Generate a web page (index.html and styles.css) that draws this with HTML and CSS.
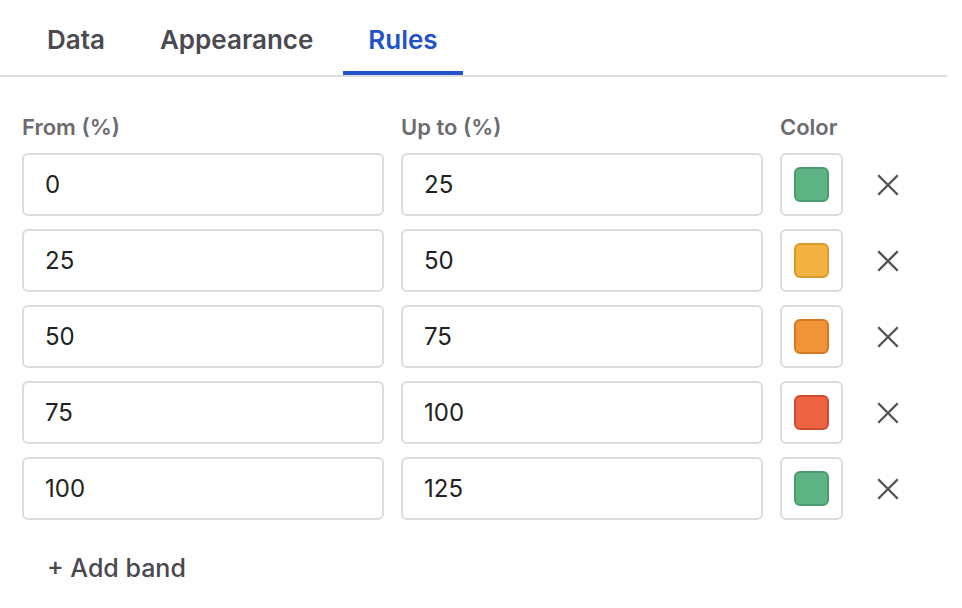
FILE: index.html
```html
<!DOCTYPE html>
<html lang="en">
<head>
  <meta charset="UTF-8">
  <title>Rules</title>
  <link rel="stylesheet" href="styles.css">
</head>
<body>
  <div class="panel">
    <div class="tabs">
      <div class="tab">Data</div>
      <div class="tab">Appearance</div>
      <div class="tab active">Rules</div>
    </div>
    <div class="rules">
      <div class="band-row band-head">
        <div class="col-input">From (%)</div>
        <div class="col-input">Up to (%)</div>
        <div class="col-color">Color</div>
      </div>
      <div class="band-row">
        <input class="field" type="text" value="0">
        <input class="field" type="text" value="25">
        <div class="swatch-box"><span class="swatch swatch-green"></span></div>
        <button class="remove"><svg viewBox="0 0 24 24" width="26" height="26"><path d="M3 3L21 21M21 3L3 21" stroke="#505055" stroke-width="2.2" fill="none"/></svg></button>
      </div>
      <div class="band-row">
        <input class="field" type="text" value="25">
        <input class="field" type="text" value="50">
        <div class="swatch-box"><span class="swatch swatch-yellow"></span></div>
        <button class="remove"><svg viewBox="0 0 24 24" width="26" height="26"><path d="M3 3L21 21M21 3L3 21" stroke="#505055" stroke-width="2.2" fill="none"/></svg></button>
      </div>
      <div class="band-row">
        <input class="field" type="text" value="50">
        <input class="field" type="text" value="75">
        <div class="swatch-box"><span class="swatch swatch-orange"></span></div>
        <button class="remove"><svg viewBox="0 0 24 24" width="26" height="26"><path d="M3 3L21 21M21 3L3 21" stroke="#505055" stroke-width="2.2" fill="none"/></svg></button>
      </div>
      <div class="band-row">
        <input class="field" type="text" value="75">
        <input class="field" type="text" value="100">
        <div class="swatch-box"><span class="swatch swatch-red"></span></div>
        <button class="remove"><svg viewBox="0 0 24 24" width="26" height="26"><path d="M3 3L21 21M21 3L3 21" stroke="#505055" stroke-width="2.2" fill="none"/></svg></button>
      </div>
      <div class="band-row">
        <input class="field" type="text" value="100">
        <input class="field" type="text" value="125">
        <div class="swatch-box"><span class="swatch swatch-green"></span></div>
        <button class="remove"><svg viewBox="0 0 24 24" width="26" height="26"><path d="M3 3L21 21M21 3L3 21" stroke="#505055" stroke-width="2.2" fill="none"/></svg></button>
      </div>
      <button class="add-band">+ Add band</button>
    </div>
  </div>
</body>
</html>
```

FILE: styles.css
```css
body {
  margin: 0;
  background: #fff;
  font-family: Inter, "Liberation Sans", sans-serif;
  color: #222;
}
.panel {
  width: 947px;
}
.tabs {
  display: flex;
  gap: 5px;
  padding-left: 22px;
  border-bottom: 2px solid #dddddd;
}
.tab {
  padding: 25px 25px 16px;
  font-size: 26px;
  line-height: 30px;
  font-weight: 600;
  color: #4a4a50;
  border-bottom: 4px solid transparent;
}
.tab.active {
  color: #2253c8;
  border-bottom-color: #2253c8;
}
.rules {
  padding: 37px 0 0 22px;
}
.band-row {
  display: flex;
  align-items: center;
  gap: 17px;
  margin-bottom: 13px;
}
.band-head {
  font-size: 22px;
  font-weight: 600;
  color: #6b6b70;
  margin-bottom: 13px;
  line-height: 26px;
}
.col-input {
  width: 362px;
}
.col-color {
  width: 63px;
}
.field {
  box-sizing: border-box;
  width: 362px;
  height: 63px;
  border: 2px solid #dcdcdc;
  border-radius: 6px;
  padding: 0 21px;
  font-family: Inter, "Liberation Sans", sans-serif;
  font-size: 24px;
  color: #222;
  outline: none;
}
.swatch-box {
  box-sizing: border-box;
  width: 63px;
  height: 63px;
  border: 2px solid #dcdcdc;
  border-radius: 6px;
  display: flex;
  align-items: center;
  justify-content: center;
}
.swatch {
  box-sizing: border-box;
  width: 35px;
  height: 35px;
  border-radius: 6px;
  border: 2px solid;
}
.swatch-green { background: #5db384; border-color: #4c9a6f; }
.swatch-yellow { background: #f2b341; border-color: #d9992c; }
.swatch-orange { background: #f19437; border-color: #d47a26; }
.swatch-red { background: #ee6342; border-color: #cf4b2f; }
.remove {
  width: 56px;
  height: 56px;
  border: none;
  background: none;
  padding: 0;
  display: flex;
  align-items: center;
  justify-content: center;
  cursor: pointer;
}
.add-band {
  margin-top: 20px;
  border: none;
  background: none;
  padding: 0 0 0 25px;
  font-family: Inter, "Liberation Sans", sans-serif;
  font-size: 25px;
  font-weight: 500;
  color: #48484e;
  cursor: pointer;
}
```
